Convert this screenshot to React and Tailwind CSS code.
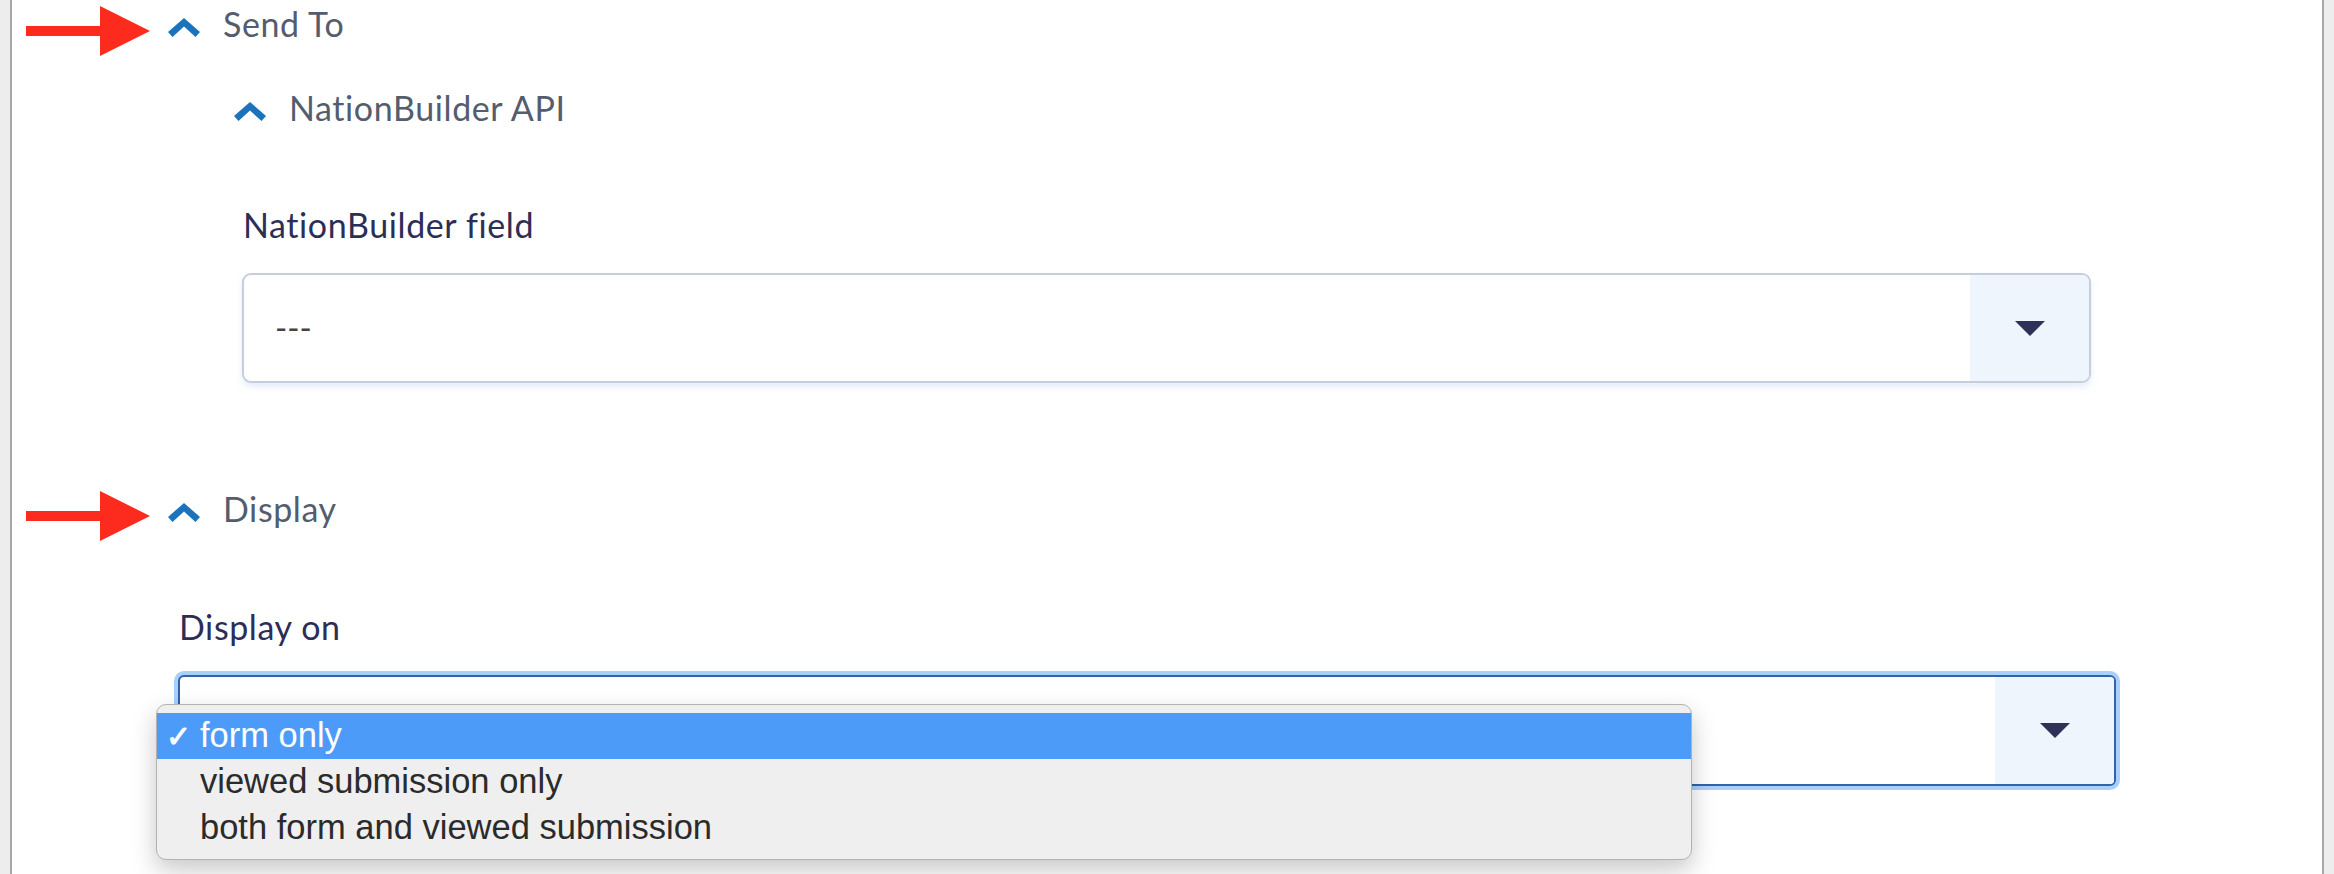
import React from "react";

const FONT = { fontFamily: "Lato, 'Open Sans', sans-serif" };

function RedArrow() {
    return (
        <svg width="124" height="50" viewBox="0 0 124 50" className="shrink-0 translate-y-[4px]">
            <rect x="0" y="20" width="76" height="10" fill="#fc2b1d" />
            <polygon points="74,0 124,25 74,50" fill="#fc2b1d" />
        </svg>
    );
}

function Chevron() {
    return (
        <svg width="32" height="19" viewBox="0 0 32 19" className="shrink-0">
            <polygon points="16,0 32,14 27.5,19 16,8.5 4.5,19 0,14" fill="#1b74bb" />
        </svg>
    );
}

function SectionHeader({ title, arrow }) {
    return (
        <div className="flex items-center h-[54px]">
            {arrow && <RedArrow />}
            <div className={arrow ? "ml-[18px]" : ""}>
                <Chevron />
            </div>
            <span className="ml-[23px] text-[34px] tracking-[0.6px] leading-[54px] text-[#535d6e] -translate-y-[3px]">{title}</span>
        </div>
    );
}

function SelectBox({ value, focused }) {
    const frame = focused
        ? "border-2 border-[#3163a6] shadow-[0_0_0_4px_#a9d0fb] rounded-[6px]"
        : "border-2 border-[#c6cedb] shadow-[0_4px_6px_rgba(180,205,240,0.35)] rounded-[9px]";
    return (
        <div className={`flex bg-white overflow-hidden ${focused ? "h-[111px]" : "h-[110px]"} ${frame}`}>
            <div className="flex-1 flex items-center pl-[31px] text-[33px] text-[#444]">{value}</div>
            <div className="w-[119px] bg-[#eef5fd] flex items-center justify-center">
                <svg width="30" height="15" viewBox="0 0 30 15">
                    <polygon points="0,0 30,0 15,15" fill="#2f3159" />
                </svg>
            </div>
        </div>
    );
}

function MenuRow({ label, selected }) {
    return (
        <div className={`flex items-center h-[46px] text-[34.5px] ${selected ? "bg-[#4d9bf8] text-white" : "text-[#2b2b2b]"}`}>
            <span className="w-[43px] pl-[9px] text-[30px] font-bold">{selected ? "✓" : ""}</span>
            <span>{label}</span>
        </div>
    );
}

export default function App() {
    const options = ["form only", "viewed submission only", "both form and viewed submission"];

    return (
        <div className="h-[874px] overflow-hidden bg-[#ededed] px-[10px]" style={FONT}>
            <div className="h-full bg-white border-x-2 border-[#a7a7a7]">
                <div className="pl-[14px]">
                    <SectionHeader title="Send To" arrow />
                </div>
                <div className="pl-[222px] mt-[30px]">
                    <SectionHeader title="NationBuilder API" />
                </div>
                <div className="pl-[230px] pr-[231px] mt-[67px]">
                    <div className="text-[34px] tracking-[0.6px] leading-[40px] text-[#2c2e56] pl-[1px]">NationBuilder field</div>
                    <div className="mt-[28px]">
                        <SelectBox value="---" />
                    </div>
                </div>

                <div className="pl-[14px] mt-[102px]">
                    <SectionHeader title="Display" arrow />
                </div>
                <div className="pl-[166px] pr-[206px] mt-[68px]">
                    <div className="text-[34px] tracking-[0.6px] leading-[40px] text-[#2c2e56] pl-[1px]">Display on</div>
                    <div className="relative mt-[28px]">
                        <SelectBox value="" focused />
                        <div
                            className="absolute left-[-22px] top-[29px] w-[1536px] py-[8px] bg-[#efefef] border border-[#b3b3b3] rounded-[10px] shadow-[0_10px_24px_rgba(0,0,0,0.22)]"
                            style={{ fontFamily: "'Liberation Sans', Arial, sans-serif" }}
                        >
                            {options.map((opt, i) => (
                                <MenuRow key={opt} label={opt} selected={i === 0} />
                            ))}
                        </div>
                    </div>
                </div>
            </div>
        </div>
    );
}
